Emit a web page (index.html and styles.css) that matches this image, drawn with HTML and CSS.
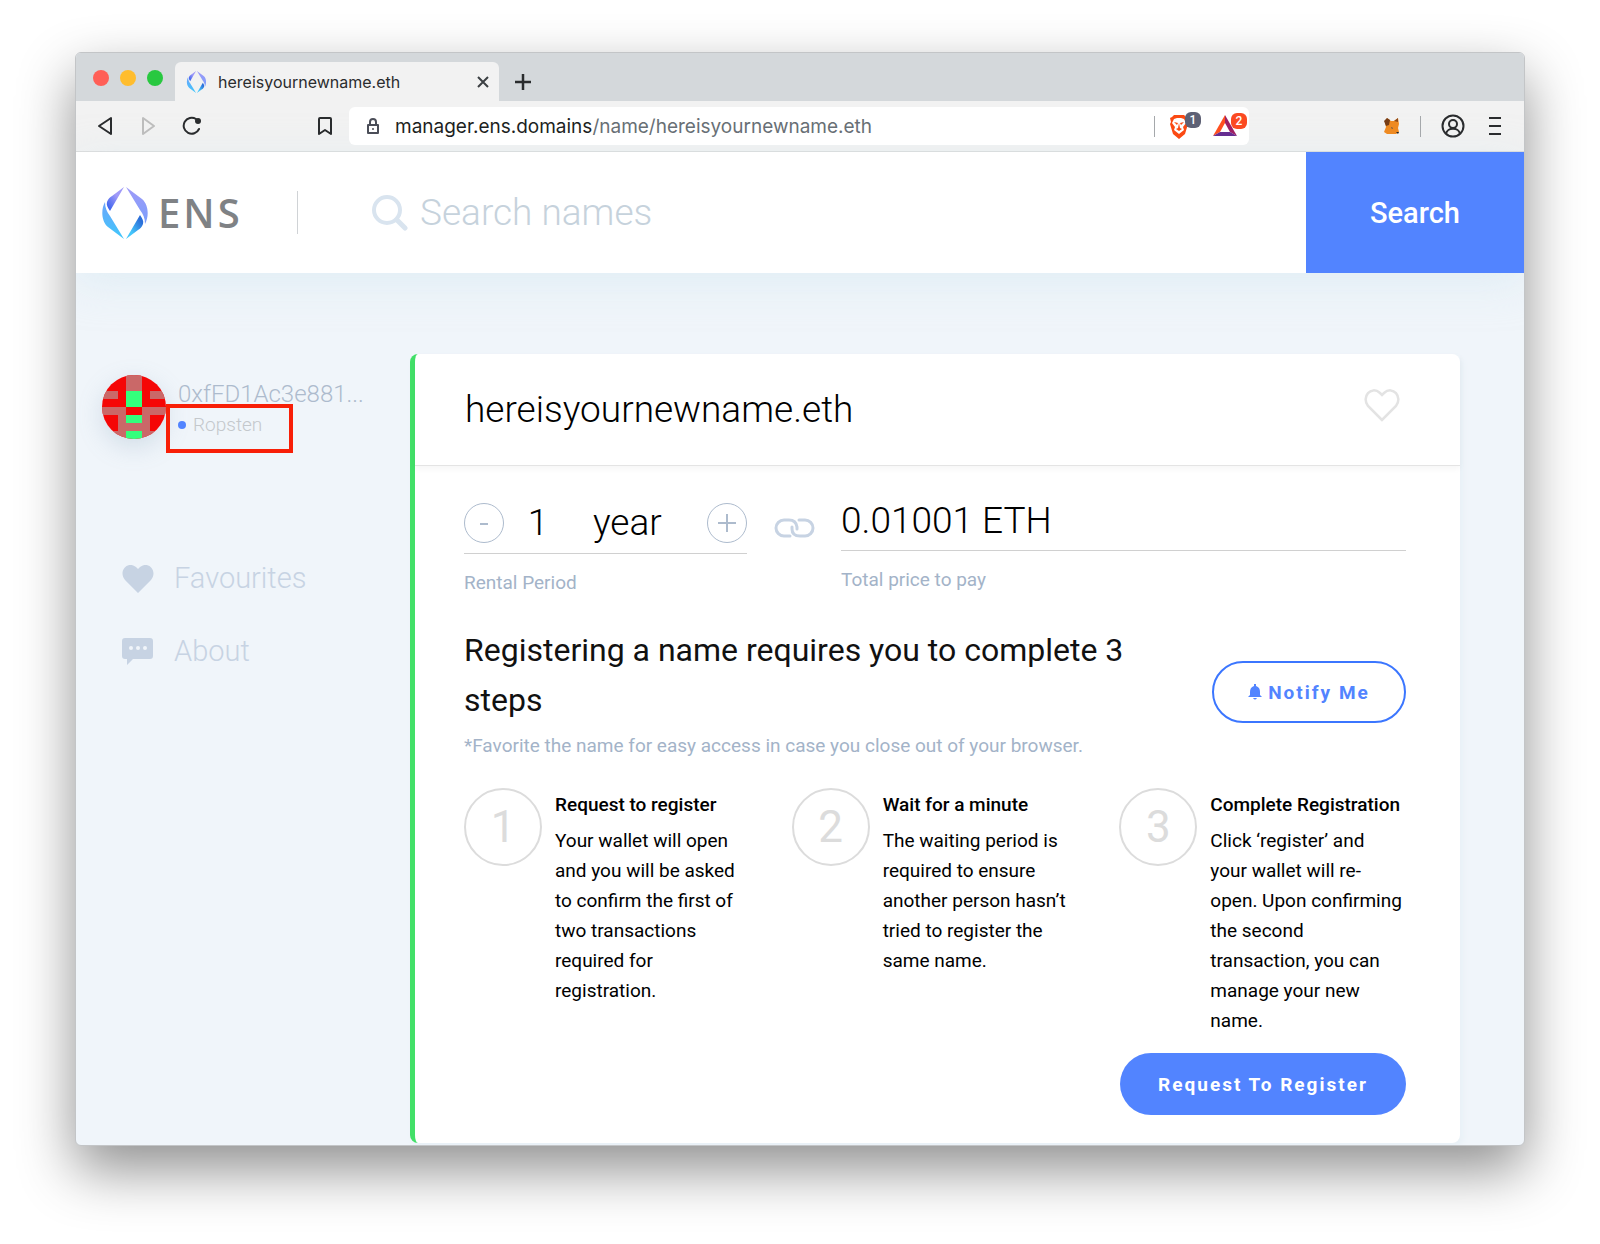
FILE: index.html
```html
<!DOCTYPE html>
<html lang="en">
<head>
    <meta charset="UTF-8">
    <meta name="viewport" content="width=device-width, initial-scale=1.0">
    <title>hereisyournewname.eth</title>
    <link rel="stylesheet" href="styles.css">
</head>
<body>
    <svg class="defs" aria-hidden="true">
        <defs>
            <linearGradient id="ensTop" x1="0" y1="0" x2="0" y2="1">
                <stop offset="0" stop-color="#a09af8"/>
                <stop offset="1" stop-color="#7a9ffb"/>
            </linearGradient>
            <linearGradient id="ensInner" x1="1" y1="0" x2="0" y2="1">
                <stop offset="0.4" stop-color="#a09af8"/>
                <stop offset="0.9" stop-color="#3a62ee"/>
            </linearGradient>
            <linearGradient id="ensBottom" x1="0" y1="0" x2="0" y2="1">
                <stop offset="0" stop-color="#6ca4fb"/>
                <stop offset="1" stop-color="#3fc8fb"/>
            </linearGradient>
            <linearGradient id="ensCorner" x1="1" y1="0" x2="0" y2="1">
                <stop offset="0.2" stop-color="#2b6fd9"/>
                <stop offset="0.7" stop-color="#44c6fb"/>
            </linearGradient>
            <symbol id="ens" viewBox="0 0 46 52">
                <path d="M22 0L8 24C6 21 4 18 5 15C6 12 8 10 10 9Z" fill="url(#ensInner)"/>
                <path d="M3 15C3 21 5 25 8 29L22 52L6 40C-1 34 -1 22 3 15Z" fill="url(#ensBottom)"/>
                <path d="M24 0L40 12C47 18 47 30 43 37C43 31 41 27 38 23Z" fill="url(#ensTop)"/>
                <path d="M24 52L38 28C40 31 42 34 41 37C40 40 38 42 36 43Z" fill="url(#ensCorner)"/>
            </symbol>
        </defs>
    </svg>

    <div class="window">
        <div class="tab-strip">
            <div class="lights">
                <span class="light red"></span>
                <span class="light yellow"></span>
                <span class="light green"></span>
            </div>
            <div class="tab">
                <svg class="favicon"><use href="#ens"/></svg>
                <span class="tab-title">hereisyournewname.eth</span>
                <button class="icon-button" aria-label="Close tab">
                    <svg width="12" height="12" viewBox="0 0 12 12"><path d="M1 1L11 11M11 1L1 11" stroke="#3c4043" stroke-width="2"/></svg>
                </button>
            </div>
            <button class="icon-button new-tab" aria-label="New tab">
                <svg width="16" height="16" viewBox="0 0 16 16"><path d="M8 0V16M0 8H16" stroke="#2a2c2e" stroke-width="2.500"/></svg>
            </button>
        </div>

        <div class="toolbar">
            <div class="nav-buttons">
                <button class="icon-button" aria-label="Back">
                    <svg width="20" height="20" viewBox="0 0 20 20"><path d="M15 2V18L3 10Z" fill="none" stroke="#2a2c2e" stroke-width="2" stroke-linejoin="round"/></svg>
                </button>
                <button class="icon-button" aria-label="Forward">
                    <svg width="20" height="20" viewBox="0 0 20 20"><path d="M4 2V18L15 10Z" fill="none" stroke="#bdbdbd" stroke-width="2" stroke-linejoin="round"/></svg>
                </button>
                <button class="icon-button" aria-label="Reload">
                    <svg width="20" height="20" viewBox="0 0 20 20"><path d="M14 3A8 8 0 1 0 17 13" fill="none" stroke="#2a2c2e" stroke-width="2" stroke-linecap="round"/><circle cx="16" cy="5" r="3" fill="#2a2c2e"/></svg>
                </button>
            </div>
            <button class="icon-button bookmark" aria-label="Bookmark">
                <svg width="14" height="18" viewBox="0 0 14 18"><path d="M1 2Q1 1 2 1H12Q13 1 13 2V17L7 13L1 17Z" fill="none" stroke="#2a2c2e" stroke-width="2" stroke-linejoin="round"/></svg>
            </button>
            <div class="address">
                <svg width="14" height="16" viewBox="0 0 14 16"><path d="M2 7H12V15H2ZM4 7V4A3 3 0 0 1 10 4V7" fill="none" stroke="#4b4e58" stroke-width="2" stroke-linejoin="round"/><circle cx="7" cy="11" r="1" fill="#4b4e58"/></svg>
                <span class="url">manager.ens.domains<span class="path">/name/hereisyournewname.eth</span></span>
                <span class="divider"></span>
                <button class="icon-button extension" aria-label="Shields">
                    <svg width="20" height="25" viewBox="0 0 20 25"><path d="M5 1H15L17 3L19 4L18 8L19 10L16 20L10 25L4 20L1 10L2 8L1 4L3 3Z" fill="#fb4a13"/><path d="M5 5L8 4H12L15 5L17 9L14 13L15 16L10 20L5 16L6 13L3 9Z" fill="#fff"/><path d="M5 8L9 9L8 11ZM15 8L11 9L12 11ZM10 9L11 14L13 15L10 17L7 15L9 14Z" fill="#fb4a13"/></svg>
                    <span class="badge gray">1</span>
                </button>
                <button class="icon-button extension" aria-label="Rewards">
                    <svg width="24" height="22" viewBox="0 0 24 22"><path d="M12 0L0 21L7 17L12 8Z" fill="#ff4f1f"/><path d="M12 0L24 21L17 17L12 8Z" fill="#9e1f63"/><path d="M0 21H24L17 17H7Z" fill="#662d91"/></svg>
                    <span class="badge orange">2</span>
                </button>
            </div>
            <div class="browser-tools">
                <button class="icon-button" aria-label="Wallet">
                    <svg width="16" height="16" viewBox="0 0 16 16"><path d="M1 5L3 0L7 3L10 3L14 0L15 6L14 10L15 14L12 16H3L0 14L2 9Z" fill="#ee8a22"/><path d="M0 3L3 0L6 2L5 7L2 8Z" fill="#763d16"/><path d="M10 3L14 0L14 4Z" fill="#8d4b1b"/><path d="M7 9L9 10L8 11Z" fill="#3a4a5a"/><path d="M12 14H15L14 16Z" fill="#222"/></svg>
                </button>
                <span class="divider"></span>
                <button class="icon-button" aria-label="Profile">
                    <svg width="24" height="24" viewBox="0 0 24 24" fill="none" stroke="#2a2c2e" stroke-width="2"><circle cx="12" cy="12" r="10.500"/><circle cx="12" cy="10" r="4"/><path d="M5 20C6 13 18 13 19 20"/></svg>
                </button>
                <button class="icon-button" aria-label="Menu">
                    <svg width="12" height="18" viewBox="0 0 12 18"><path d="M0 1H12M0 9H12M0 17H12" stroke="#2a2c2e" stroke-width="2"/></svg>
                </button>
            </div>
        </div>

        <header class="site-header">
            <a class="logo" href="#">
                <svg class="logo-mark"><use href="#ens"/></svg>
                <span class="logo-text">ENS</span>
            </a>
            <form class="search">
                <label class="search-label" for="search" aria-label="Search names">
                    <svg width="37" height="37" viewBox="0 0 37 37" fill="none" stroke="#d9e4ef"><circle cx="16" cy="16" r="13" stroke-width="4"/><path d="M26 26L34 34" stroke-width="5" stroke-linecap="round"/></svg>
                </label>
                <input class="search-input" id="search" type="text" placeholder="Search names">
                <button class="search-button" type="button">Search</button>
            </form>
        </header>

        <div class="page">
            <aside class="sidebar">
                <div class="account">
                    <svg class="avatar" viewBox="0 0 8 8" shape-rendering="crispEdges">
                        <path d="M0 0H8V8H0Z" fill="#f50606"/>
                        <path d="M3 0H5V2H3ZM0 2H2V3H0ZM6 2H8V3H6ZM0 4H3V5H0ZM5 4H8V5H5ZM2 5H3V7H2ZM5 5H6V7H5ZM0 7H8V8H0ZM3 6H5V7H3Z" fill="#ca6868"/>
                        <path d="M3 2H5V4H3ZM3 5H5V6H3ZM3 7H5V8H3Z" fill="#33ff7c"/>
                    </svg>
                    <div class="account-info">
                        <div class="address-short">0xfFD1Ac3e881...</div>
                        <div class="network">Ropsten</div>
                    </div>
                </div>
                <nav class="menu">
                    <a class="menu-item" href="#">
                        <svg width="32" height="28" viewBox="0 0 32 28"><path d="M16 28L3 15C-4 7 5 -5 14 2L16 4L18 2C27 -5 36 7 29 15Z" fill="#c7d3e3"/></svg>
                        Favourites
                    </a>
                    <a class="menu-item" href="#">
                        <svg width="32" height="27" viewBox="0 0 32 27"><path d="M3 0H28Q31 0 31 3V18Q31 21 28 21H11L5 27V21H3Q0 21 0 18V3Q0 0 3 0Z" fill="#c7d3e3"/><g fill="#f0f5fa"><circle cx="9" cy="10" r="2"/><circle cx="16" cy="10" r="2"/><circle cx="23" cy="10" r="2"/></g></svg>
                        About
                    </a>
                </nav>
            </aside>

            <main class="card">
                <div class="card-header">
                    <h1 class="name">hereisyournewname.eth</h1>
                    <button class="icon-button favourite" aria-label="Add to favourites">
                        <svg width="36" height="34" viewBox="0 0 36 34"><path d="M18 31L4 17C-3 8 7 -4 16 4L18 6L20 4C29 -4 39 8 32 17Z" fill="none" stroke="#e3e3e3" stroke-width="2.500"/></svg>
                    </button>
                </div>

                <div class="card-body">
                    <div class="pricer">
                        <div class="period">
                            <div class="period-controls">
                                <button class="round-button" aria-label="Less">
                                    <svg width="20" height="20" viewBox="0 0 20 20"><path d="M6 11H14" stroke="#adbbcd" stroke-width="2"/></svg>
                                </button>
                                <input class="years" id="years" type="text" value="1">
                                <span class="unit">year</span>
                                <button class="round-button" aria-label="More">
                                    <svg width="20" height="20" viewBox="0 0 20 20"><path d="M10 1V19M1 10H19" stroke="#adbbcd" stroke-width="2"/></svg>
                                </button>
                            </div>
                            <label class="caption" for="years">Rental Period</label>
                        </div>
                        <svg class="chain" width="41" height="21" viewBox="0 0 41 21" fill="none" stroke="#c7d3e3" stroke-width="3" stroke-linecap="round"><path d="M16 18H10A8 8 0 0 1 10 2H15Q22 2 23 9V11"/><path d="M25 2H31A8 8 0 0 1 31 18H26Q18 18 18 11V9"/></svg>
                        <div class="price">
                            <div class="price-value">0.01001 ETH</div>
                            <div class="caption">Total price to pay</div>
                        </div>
                    </div>

                    <div class="intro">
                        <div>
                            <h2 class="intro-title">Registering a name requires you to complete 3 steps</h2>
                            <p class="intro-note">*Favorite the name for easy access in case you close out of your browser.</p>
                        </div>
                        <button class="button outline">
                            <svg width="14" height="16" viewBox="0 0 14 16"><path d="M6 0H8V2C11 3 12 5 12 8V11L14 13H0L2 11V8C2 5 3 3 6 2ZM5 14H9Q7 17 5 14Z" fill="#5284ff"/></svg>
                            Notify Me
                        </button>
                    </div>

                    <div class="steps">
                        <section class="step">
                            <div class="number">1</div>
                            <div>
                                <h3>Request to register</h3>
                                <p>Your wallet will open and you will be asked to confirm the first of two transactions required for registration.</p>
                            </div>
                        </section>
                        <section class="step">
                            <div class="number">2</div>
                            <div>
                                <h3>Wait for a minute</h3>
                                <p>The waiting period is required to ensure another person hasn’t tried to register the same name.</p>
                            </div>
                        </section>
                        <section class="step">
                            <div class="number">3</div>
                            <div>
                                <h3>Complete Registration</h3>
                                <p>Click ‘register’ and your wallet will re-open. Upon confirming the second transaction, you can manage your new name.</p>
                            </div>
                        </section>
                    </div>

                    <div class="actions">
                        <button class="button solid">Request To Register</button>
                    </div>
                </div>
            </main>
        </div>
        <div class="highlight"></div>
    </div>
</body>
</html>
```
FILE: styles.css
```css
* {
    box-sizing: border-box;
}
body {
    margin: 0;
    padding: 52px 75px 100px;
    background-color: #fff;
    font-family: Roboto, sans-serif;
    color: #000;
}
h1, h2, h3, p {
    margin: 0;
    font-weight: 400;
}
button, input {
    font-family: inherit;
}
svg {
    flex-shrink: 0;
}
.defs {
    position: absolute;
    width: 0;
    height: 0;
}
.icon-button {
    display: flex;
    align-items: center;
    padding: 0;
    border: none;
    background: none;
    cursor: pointer;
}
.window {
    position: relative;
    border-radius: 6px;
    border: 1px solid #c3c5c7;
    background-color: #f0f5fa;
    box-shadow: 0 24px 56px rgba(0, 0, 0, 0.44);
    overflow: hidden;
}

/* browser */
.tab-strip {
    display: flex;
    align-items: flex-end;
    height: 48px;
    background-color: #d4d8db;
}
.lights {
    display: flex;
    gap: 11px;
    padding: 0 12px 15px 17px;
}
.light {
    width: 16px;
    height: 16px;
    border-radius: 50%;
}
.red {
    background-color: #ff5f57;
}
.yellow {
    background-color: #ffbd2e;
}
.green {
    background-color: #28c840;
}
.tab {
    display: flex;
    align-items: center;
    width: 324px;
    height: 39px;
    padding: 0 10px 0 11px;
    border-radius: 6px 6px 0 0;
    background-color: #f2f2f2;
}
.favicon {
    width: 21px;
    height: 22px;
}
.tab-title {
    flex: 1;
    padding-left: 11px;
    font-family: Inter, sans-serif;
    font-size: 16px;
    color: #2a2c2e;
}
.new-tab {
    height: 39px;
    margin-left: 16px;
}
.toolbar {
    display: flex;
    align-items: center;
    height: 51px;
    padding: 0 23px 0 20px;
    border-bottom: 1px solid #dcdcdc;
    background-color: #f2f2f2;
}
.nav-buttons {
    display: flex;
    gap: 23px;
}
.bookmark {
    margin: 0 17px 0 116px;
}
.address {
    display: flex;
    align-items: center;
    width: 900px;
    height: 38px;
    padding: 0 2px 0 17px;
    border-radius: 6px;
    background-color: #fff;
}
.url {
    flex: 1;
    padding-left: 15px;
    font-family: Inter, sans-serif;
    font-size: 19px;
    color: #1d1f22;
}
.path {
    color: #686f75;
}
.divider {
    width: 1px;
    height: 21px;
    background-color: #a5a8ab;
}
.extension {
    position: relative;
    margin-left: 14px;
    margin-right: 10px;
}
.badge {
    position: absolute;
    top: -2px;
    left: 16px;
    width: 16px;
    border-radius: 6px;
    font-size: 12px;
    font-weight: 500;
    line-height: 16px;
    text-align: center;
    color: #fff;
}
.gray {
    background-color: #5e6175;
}
.orange {
    left: 18px;
    background-color: #fb4a22;
}
.browser-tools {
    display: flex;
    flex: 1;
    align-items: center;
    justify-content: flex-end;
    gap: 20px;
}
.browser-tools .icon-button:last-child {
    padding-left: 4px;
}

/* site header */
.site-header {
    display: flex;
    height: 121px;
    background-color: #fff;
    box-shadow: 0 10px 40px rgba(210, 232, 242, 0.5);
}
.logo {
    display: flex;
    align-items: center;
    width: 255px;
    padding-left: 26px;
    text-decoration: none;
}
.logo-mark {
    width: 46px;
    height: 52px;
}
.logo-text {
    padding-left: 10px;
    font-family: "Open Sans", sans-serif;
    font-size: 40px;
    font-weight: 600;
    letter-spacing: 3px;
    color: #7f8285;
}
.search {
    display: flex;
    flex: 1;
    align-items: center;
}
.search-label {
    display: flex;
    align-items: center;
    height: 43px;
    margin-left: -34px;
    padding-left: 73px;
    border-left: 1px solid #d0d3d6;
}
.search-input {
    flex: 1;
    min-width: 0;
    padding: 0 12px;
    border: none;
    outline: none;
    background: none;
    font-size: 37px;
    font-weight: 300;
}
.search-input::placeholder {
    color: #c6d2dc;
}
.search-button {
    align-self: stretch;
    width: 218px;
    border: none;
    background-color: #5284ff;
    font-size: 29px;
    font-weight: 500;
    color: #fff;
    cursor: pointer;
}

/* sidebar */
.page {
    display: flex;
    padding: 81px 64px 2px 0;
}
.sidebar {
    width: 334px;
    padding: 21px 0 0 26px;
}
.account {
    display: flex;
    gap: 12px;
}
.avatar {
    width: 64px;
    height: 64px;
    border-radius: 50%;
    box-shadow: 0 8px 24px rgba(120, 150, 180, 0.25);
}
.account-info {
    padding-top: 4px;
}
.address-short {
    font-size: 24px;
    font-weight: 300;
    line-height: 30px;
    color: #adbbcd;
}
.network {
    display: flex;
    align-items: center;
    gap: 7px;
    font-size: 19px;
    font-weight: 300;
    line-height: 32px;
    color: #c4c8cc;
}
.network::before {
    content: "";
    width: 8px;
    height: 8px;
    border-radius: 50%;
    background-color: #5284ff;
}
.highlight {
    position: absolute;
    top: 351px;
    left: 90px;
    width: 127px;
    height: 49px;
    border: 4px solid #f81f07;
}
.menu {
    display: flex;
    flex-direction: column;
    gap: 32px;
    padding: 117px 0 0 20px;
}
.menu-item {
    display: flex;
    align-items: center;
    gap: 20px;
    font-size: 29px;
    font-weight: 300;
    line-height: 41px;
    color: #c7d3e3;
    text-decoration: none;
}

/* card */
.card {
    flex: 1;
    border-left: 5px solid #42e068;
    border-radius: 8px;
    background-color: #fff;
    box-shadow: 3px 4px 6px #e8f0f6;
}
.card-header {
    display: flex;
    align-items: center;
    justify-content: space-between;
    height: 112px;
    padding: 0 60px 0 50px;
    border-bottom: 1px solid #e4e4e4;
    box-shadow: 0 3px 6px rgba(0, 0, 0, 0.04);
}
.favourite {
    padding-bottom: 8px;
}
.name {
    font-size: 37px;
    font-weight: 300;
}
.card-body {
    padding: 30px 54px 28px 49px;
}
.pricer {
    display: flex;
    align-items: flex-start;
}
.period {
    width: 283px;
}
.period-controls {
    display: flex;
    align-items: center;
    height: 58px;
    padding-bottom: 4px;
    border-bottom: 1px solid #d0d0d0;
    font-size: 37px;
    font-weight: 300;
}
.round-button {
    display: flex;
    align-items: center;
    justify-content: center;
    width: 40px;
    height: 40px;
    padding: 0;
    border: 1px solid #adbbcd;
    border-radius: 50%;
    background: none;
    cursor: pointer;
}
.years {
    width: 68px;
    padding: 0;
    border: none;
    background: none;
    font-size: 37px;
    font-weight: 300;
    text-align: center;
}
.unit {
    flex: 1;
    padding-left: 21px;
}
.caption {
    display: block;
    padding-top: 16px;
    font-size: 19px;
    line-height: 26px;
    color: #a3b3c8;
}
.chain {
    margin: 22px 26px 0 27px;
}
.price {
    flex: 1;
}
.price-value {
    height: 55px;
    border-bottom: 1px solid #d0d0d0;
    font-size: 37px;
    font-weight: 300;
    line-height: 50px;
}
.intro {
    display: flex;
    align-items: center;
    justify-content: space-between;
    padding-top: 29px;
}
.intro-title {
    max-width: 680px;
    font-size: 32px;
    line-height: 50px;
    color: #111;
}
.intro-note {
    padding-top: 8px;
    font-size: 19px;
    line-height: 26px;
    color: #a3b3c8;
}
.button {
    height: 62px;
    border-radius: 31px;
    font-size: 19px;
    font-weight: 700;
    letter-spacing: 2px;
    cursor: pointer;
}
.outline {
    display: flex;
    align-items: center;
    justify-content: center;
    gap: 6px;
    width: 194px;
    border: 2px solid #3b76ff;
    background-color: #fff;
    color: #5284ff;
}
.solid {
    width: 286px;
    border: none;
    background-color: #5284ff;
    color: #fff;
}
.steps {
    display: grid;
    grid-template-columns: repeat(3, 1fr);
    gap: 41px;
    padding-top: 29px;
}
.step {
    display: flex;
    gap: 13px;
}
.number {
    flex-shrink: 0;
    width: 78px;
    height: 78px;
    border: 2px solid #dcdcdc;
    border-radius: 50%;
    font-size: 44px;
    font-weight: 400;
    line-height: 74px;
    text-align: center;
    color: #dcdcdc;
}
.step h3 {
    padding-top: 2px;
    font-size: 19px;
    font-weight: 500;
    line-height: 30px;
    white-space: nowrap;
}
.step p {
    padding: 6px 4px 0 0;
    font-size: 19px;
    line-height: 30px;
}
.actions {
    display: flex;
    justify-content: flex-end;
    padding-top: 17px;
}
```
